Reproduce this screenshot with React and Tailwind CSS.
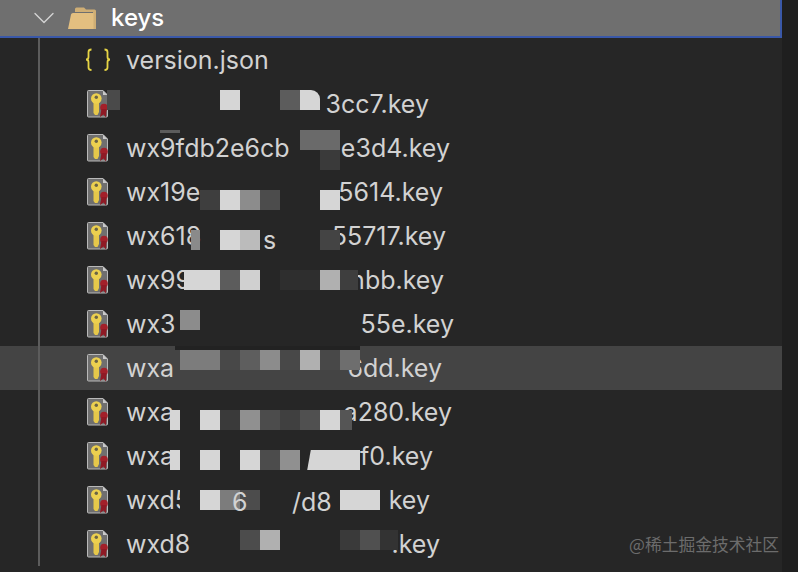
import React from 'react';
import { ChevronDown } from 'lucide-react';

const FONT = 'font-["Inter","Liberation_Sans",sans-serif]';

// left part / right part of each name; the middle is hidden under the mosaic
const files = [
  { left: '', leftW: 'w-[199px]', right: '3cc7.key', rightW: 'w-[104px]' },
  { left: 'wx9fdb2e6cb', leftW: 'w-[164px]', right: 'e3d4.key', rightW: 'w-[160px]' },
  { left: 'wx19e', leftW: 'w-[75px]', right: '5614.key', rightW: 'w-[242px]' },
  { left: 'wx618', leftW: 'w-[64px]', right: '55717.key', rightW: 'w-[256px]' },
  { left: 'wx99', leftW: 'w-[57px]', right: 'nbb.key', rightW: 'w-[261px]' },
  { left: 'wx3', leftW: 'w-[51px]', right: '55e.key', rightW: 'w-[277px]' },
  { left: 'wxa', leftW: 'w-[51px]', right: '6dd.key', rightW: 'w-[265px]', selected: true },
  { left: 'wxa', leftW: 'w-[51px]', right: 'a280.key', rightW: 'w-[275px]' },
  { left: 'wxa', leftW: 'w-[51px]', right: 'f0.key', rightW: 'w-[256px]' },
  { left: 'wxd5', leftW: 'w-[54px]', right: 'key', rightW: 'w-[250px]' },
  { left: 'wxd8', leftW: 'w-[65px]', right: '.key', rightW: 'w-[249px]' },
];

const L = '#d6d6d6';
const BG = '#262626';

// mosaic: [x, y, w, h, colour, extra classes]
const blocks = [
  [107, 90, 13, 20, '#4a4a4a'], [220, 90, 20, 20, L], [280, 90, 20, 20, '#5c5c5c'], [300, 90, 20, 20, L, 'rounded-tr-[9px]'],
  [160, 130, 20, 3, '#5c5c5c'], [300, 130, 40, 20, '#6a6a6a'], [320, 150, 20, 20, '#3a3a3a'],
  [200, 190, 20, 20, '#3e3e3e'], [220, 190, 20, 20, L], [240, 190, 20, 20, '#8c8c8c'], [260, 190, 20, 20, '#4c4c4c'], [320, 190, 20, 20, L],
  [191, 230, 9, 20, '#8a8a8a'], [220, 230, 20, 20, L], [240, 230, 20, 20, '#bbbbbb'], [320, 230, 20, 20, '#444444'],
  [184, 270, 36, 20, L], [220, 270, 20, 20, '#5c5c5c'], [240, 270, 20, 20, '#d0d0d0'], [280, 270, 40, 20, '#2e2e2e'], [320, 270, 20, 20, '#b0b0b0'], [340, 270, 18, 20, '#3e3e3e'],
  [180, 310, 20, 20, '#8c8c8c'],
  [175, 346, 185, 4, '#222222'],
  [180, 350, 40, 20, '#7c7c7c'], [220, 350, 20, 20, '#484848'], [240, 350, 20, 20, '#5e5e5e'], [260, 350, 20, 20, '#8c8c8c'], [280, 350, 20, 20, '#484848'], [300, 350, 20, 20, '#b0b0b0'], [320, 350, 20, 20, '#484848'], [340, 350, 20, 20, '#6e6e6e'],
  [170, 410, 10, 20, L], [200, 410, 20, 20, L], [220, 410, 20, 20, '#3a3a3a'], [240, 410, 20, 20, '#909090'], [260, 410, 20, 20, '#4c4c4c'], [280, 410, 20, 20, '#404040'], [300, 410, 20, 20, '#505050'], [320, 410, 20, 20, L], [340, 410, 12, 20, '#555555'],
  [170, 450, 10, 20, L], [200, 450, 20, 20, L], [240, 450, 20, 20, L], [260, 450, 20, 20, '#4c4c4c'], [280, 450, 20, 20, '#909090'],
  [300, 450, 60, 20, L, '[clip-path:polygon(18%_0,100%_0,100%_100%,12%_100%)]'],
  [180, 490, 14, 20, BG], [200, 490, 20, 20, L], [220, 490, 20, 20, '#7c7c7c'], [240, 490, 20, 20, '#4c4c4c'], [340, 490, 40, 20, L],
  [240, 530, 20, 20, '#4c4c4c'], [260, 530, 20, 20, '#b0b0b0'], [340, 530, 20, 20, '#3a3a3a'], [360, 530, 20, 20, '#505050'], [380, 530, 18, 20, '#333333'],
];

const FolderIcon = () => (
  <svg width="30" height="24" viewBox="0 0 30 24" className="shrink-0">
    <path d="M8 6 V3 Q8 1.500 9.500 1.500 H17 L19 3.500 H27.500 Q29 3.500 29 5 V23 H26 V6 Z" fill="#cfae75" />
    <path d="M1 23 L4 8.500 Q4.300 7 6 7 H26.500 V23 Z" fill="#e3bf80" />
  </svg>
);

const BracesIcon = () => (
  <svg width="26" height="24" viewBox="0 0 26 24" fill="none" stroke="#e6d445" strokeWidth="1.800" className="shrink-0">
    <path d="M6.500 1.500 Q3.500 1.500 3.500 4 V9 Q3.500 11.500 1 11.500 Q3.500 11.500 3.500 14 V19.500 Q3.500 22 6.500 22" />
    <path d="M19.500 1.500 Q22.500 1.500 22.500 4 V9 Q22.500 11.500 25 11.500 Q22.500 11.500 22.500 14 V19.500 Q22.500 22 19.500 22" />
  </svg>
);

const KeyFileIcon = () => (
  <svg width="24" height="28" viewBox="0 0 24 28" className="shrink-0">
    <path d="M1.500 0.500 H16 L20.500 5 V26 Q20.500 27 19.500 27 H1.500 Q0.500 27 0.500 26 V1.500 Q0.500 0.500 1.500 0.500 Z" fill="#6f6f6f" stroke="#b9b9b9" />
    <path d="M16 0.500 V5 H20.500 Z" fill="#c9c9c9" />
    <path d="M6.500 12 H12 V22 L10.500 25 H8 L6.500 23 Z" fill="#e6c84a" />
    <circle cx="9.300" cy="8.500" r="5.300" fill="#ecd04f" />
    <circle cx="9.300" cy="7.300" r="1.700" fill="#6b6446" />
    <circle cx="17" cy="17.500" r="3.800" fill="#a3202a" />
    <path d="M14.500 19 L13 27 L16.500 24.500 L19 27.500 L19.500 19 Z" fill="#8f1a25" />
  </svg>
);

const FileRow = ({ file }) => (
  <div className={`flex items-center h-11 pl-[87px] ${file.selected ? 'bg-[#444444]' : ''}`}>
    <div className="w-[39px] shrink-0"><KeyFileIcon /></div>
    <span className={`${file.leftW} shrink-0 whitespace-nowrap pt-[2px]`}>{file.left}</span>
    <span className={`${file.rightW} shrink-0 flex justify-end whitespace-nowrap pt-[2px]`}>{file.right}</span>
  </div>
);

export default function App() {
  return (
    <div className={`relative flex w-[798px] h-[572px] overflow-hidden bg-[#1f1f1f] text-[#d2d2d2] text-[25px] ${FONT}`}>
      <div className="relative w-[782px] h-full bg-[#262626]">
        <div className="flex items-center h-[38px] pl-[26px] bg-[#6f6f6f] border-b-2 border-r-2 border-[#3a58a8] text-white text-[24px] font-medium">
          <ChevronDown size={36} strokeWidth={0.900} className="text-[#d4d4d4] shrink-0" />
          <div className="ml-[5px] mr-[14px] flex"><FolderIcon /></div>
          <span>keys</span>
        </div>
        <div>
          <div className="flex items-center h-11 pl-[85px]">
            <div className="w-[41px] shrink-0"><BracesIcon /></div>
            <span className="pt-[2px]">version.json</span>
          </div>
          {files.map((file, i) => <FileRow key={i} file={file} />)}
        </div>

        {/* tree guide */}
        <div className="absolute left-[38px] top-[38px] w-[2px] h-[528px] bg-[#5c5c5c]" />

        {/* blurred-out part of the names */}
        {blocks.map(([x, y, w, h, c, extra], i) => (
          <div key={i} className={`absolute ${extra || ''}`} style={{ left: x, top: y, width: w, height: h, background: c }} />
        ))}

        {/* bits of letters that show through the mosaic */}
        <span className="absolute left-[232px] top-[484px]">6</span>
        <span className="absolute left-[292px] top-[484px]">/d8</span>
        <span className="absolute left-[263px] top-[222px]">s</span>
      </div>
      <span className={'absolute left-[629px] top-[532px] text-[16.8px] leading-[24px] text-[#6c6c6c] whitespace-nowrap font-["Noto_Sans_CJK_SC",sans-serif]'}>@稀土掘金技术社区</span>
    </div>
  );
}
